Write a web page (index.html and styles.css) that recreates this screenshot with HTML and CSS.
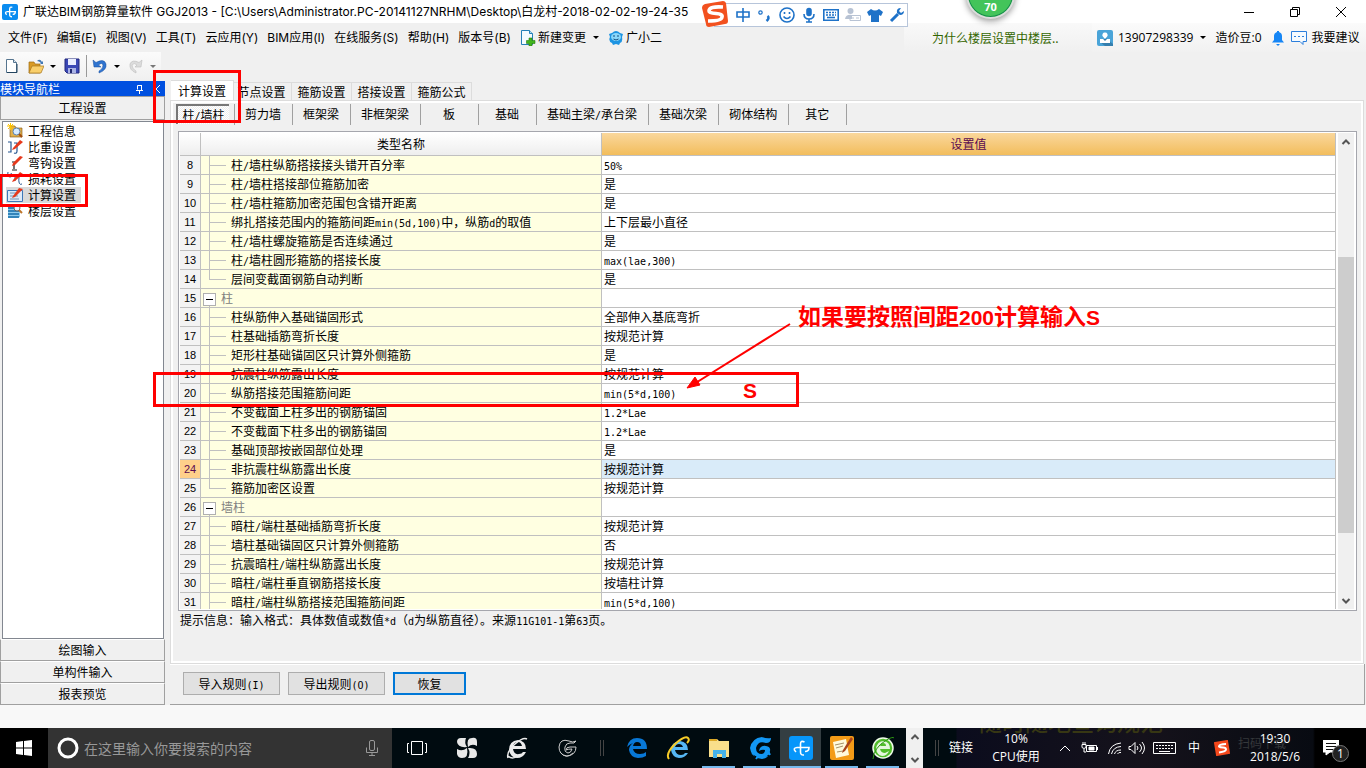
FILE: index.html
```html
<!DOCTYPE html>
<html lang="zh-CN">
<head>
<meta charset="utf-8">
<title>广联达BIM钢筋算量软件 GGJ2013</title>
<link rel="stylesheet" href="styles.css">
</head>
<body>
<div class="desktop">
  <header class="titlebar">
    <svg class="app-icon" viewBox="0 0 24 24"><rect width="24" height="24" rx="3" fill="#0a8cf0"/><path d="M15.500 5Q11.500 3.500 11.500 8v8q0 3.500 3.500 3M7 16Q3 12 8 11.500h12q0 4-4 4" fill="none" stroke="#fff" stroke-width="2"/></svg>
    <span class="title-text">广联达BIM钢筋算量软件 GGJ2013 - [C:\Users\Administrator.PC-20141127NRHM\Desktop\白龙村-2018-02-02-19-24-35</span>
    <div class="window-controls">
      <button aria-label="最小化"><svg viewBox="0 0 12 12"><path d="M1 6.500h10"/></svg></button>
      <button aria-label="还原"><svg viewBox="0 0 12 12"><path d="M1.500 3.500h7v7h-7zM3.500 3.500v-2h7v7h-2"/></svg></button>
      <button aria-label="关闭"><svg viewBox="0 0 12 12"><path d="M1 1l10 10M11 1L1 11"/></svg></button>
    </div>
  </header>

  <nav class="menubar">
    <div class="menus">
      <button>文件(F)</button><button>编辑(E)</button><button>视图(V)</button><button>工具(T)</button><button>云应用(Y)</button><button>BIM应用(I)</button><button>在线服务(S)</button><button>帮助(H)</button><button>版本号(B)</button>
      <button class="with-icon"><svg viewBox="0 0 16 16"><path d="M1.500.5h8l3 3v11h-11z" fill="#f4fbff" stroke="#2580b8"/><path d="M9.500.5v3h3" fill="#b9def2" stroke="#2580b8"/><path d="M9 8h3v2.500h3v3h-3V16H9v-2.500H6.500v-3H9z" fill="#41b51d" stroke="#287a10" stroke-width=".6"/></svg>新建变更<i class="caret"></i></button>
      <button class="with-icon"><svg viewBox="0 0 16 16"><path d="M1 4l3-1Q8-1 12 3l3 1-1 3q1 5-2 6l-1 2-3-1-3 1-1-2Q0 11 2 7z" fill="#1d94e2"/><ellipse cx="8" cy="7" rx="5" ry="4" fill="#8ad7fa"/><path d="M6 5v2M10 5v2M5.500 9Q8 11 10.500 9" stroke="#124e80" fill="none"/></svg>广小二</button>
    </div>
    <a class="help-link" href="#">为什么楼层设置中楼层..</a>
    <div class="account">
      <svg viewBox="0 0 16 16"><rect width="16" height="16" rx="2" fill="#4aa4d8"/><path d="M9 8l7 6v2H8l-5-4z" fill="#357fae"/><path d="M8 2.500a2.500 2.500 0 012 4.200L8 9 6 6.700A2.500 2.500 0 018 2.500zM3 9h3l2 2 2-2h3v4H3z" fill="#fff"/></svg>
      <button class="phone">13907298339<i class="caret"></i></button>
      <span class="beans">造价豆:0</span>
      <svg viewBox="0 0 16 16"><path d="M7 1h2v1q3 1 3 4v4l2 2.500H2L4 10V6q0-3 3-4zM6 14h4l-2 2z" fill="#1686f5"/></svg>
      <svg viewBox="0 0 16 16"><path d="M.5 1.500h15v10H12v3L9 11.500H.5z" fill="#f6fbff" stroke="#2c7fdc"/><path d="M3 6.500h2M7 6.500h2M11 6.500h2" stroke="#2c7fdc"/></svg>
      <button>我要建议</button>
    </div>
  </nav>

  <div class="toolbar">
    <button aria-label="新建"><svg viewBox="0 0 16 16"><path d="M2.500 1.500h7l3 3v10h-10z" fill="#fff" stroke="#56758f"/><path d="M9.500 1.500v3h3" fill="#dce8f4" stroke="#56758f"/><path d="M3 14.500h10V6" fill="none" stroke="#23445f"/></svg></button>
    <button aria-label="打开" class="drop"><svg viewBox="0 0 16 16"><path d="M1 4h5l1 2h5v9H1z" fill="#d99b26" stroke="#9c6c16" stroke-width=".7"/><path d="M4 8h12l-3 7H1z" fill="#f9cf6b" stroke="#a8761c" stroke-width=".7"/><path d="M9 3q3-3 5 1l1-1v3h-3l1-1q-2-2-4-2z" fill="#4279b5"/></svg><i class="caret"></i></button>
    <button aria-label="保存"><svg viewBox="0 0 16 16"><path d="M1 1h14v14H3l-2-2z" fill="#3a47b5" stroke="#23297d"/><path d="M4 1h8v6H4z" fill="#e9edff"/><path d="M4 10h8v5H4z" fill="#aab3e5"/><path d="M6 11h2v4H6z" fill="#20286f"/></svg></button>
    <i class="rule"></i>
    <button aria-label="撤销" class="drop"><svg viewBox="0 0 16 16"><path d="M1 2l1 7h7L6.500 7Q10 4 11 7q0 4-4 6v2q8-3 7-9Q12 0 4 4.500z" fill="#2f74d0" stroke="#174d9c" stroke-width=".5"/></svg><i class="caret"></i></button>
    <button aria-label="重做" class="drop" disabled><svg viewBox="0 0 16 16"><path d="M14 2l-1 7H7l2-2Q6 4 4 7q0 4 4 6v2Q1 12 2 6q2-5 9-1.500z" fill="#dcdcdc" stroke="#bdbdbd" stroke-width=".6"/></svg><i class="caret"></i></button>
  </div>

  <main class="workspace">
    <aside class="sidebar">
      <div class="side-title"><span>模块导航栏</span>
        <svg viewBox="0 0 28 12"><path d="M3.500 6.500V2.500h4v4M2 7.500h7M5.500 7v4M7.500 2v5M26 2l-4 4 4 4" fill="none" stroke="#fff"/></svg></div>
      <button class="side-group first">工程设置</button>
      <ul class="side-list">
        <li><svg viewBox="0 0 16 16"><path d="M3 3h5l1 2h6v9H3z" fill="#e0b04c" stroke="#80530f" stroke-width=".6"/><path d="M0 3h7M3.500 0v7M1 1l5 5M6 1L1 6" stroke="#ffc400"/><circle cx="9.500" cy="8.500" r="3.500" fill="#d6ebff" stroke="#5a82b0"/><path d="M12 11l3 3" stroke="#a04c10" stroke-width="2"/></svg>工程信息</li>
        <li><svg viewBox="0 0 16 16"><path d="M1 3h3v10H1M7 4h3v8q0 3-3 2" fill="none" stroke="#27568f" stroke-width="1.200"/><path d="M6 9L13 1l3 2-8 7-3 1z" fill="#e6391c"/></svg>比重设置</li>
        <li><svg viewBox="0 0 16 16"><path d="M7 8v6M5 15h5M5 7h4" fill="none" stroke="#181818" stroke-width="1.200"/><path d="M6 8L13 1l3 1-8 8-3 1z" fill="#e6391c"/></svg>弯钩设置</li>
        <li><svg viewBox="0 0 16 16"><path d="M1 1q-1 5 2 5t1-4M8 4v6M12 6q-1 9 3 7" fill="none" stroke="#27568f"/><path d="M6 9L13 1l3 2-8 7-3 1z" fill="#e6391c"/></svg>损耗设置</li>
        <li class="selected"><svg viewBox="0 0 16 16"><path d="M.5 3.500h15v11H.5z" fill="#dceaf9" stroke="#3d77b7"/><path d="M3 6h7M3 9h8M3 12h9" stroke="#7793b1"/><path d="M6 9L12 1l4 1-8 8-3 1z" fill="#e6391c"/></svg><span>计算设置</span></li>
        <li><svg viewBox="0 0 16 16"><path d="M1 4l3-2h11l-2 2v10l-2 1H1z" fill="#8dcbed"/><path d="M1 5h11M1 8h11M1 11h11M1 14h11" stroke="#146da9" stroke-width="1.500"/><circle cx="10" cy="5" r="3" fill="#e6f4ff" stroke="#666"/><path d="M12 7l3 3" stroke="#bd752a" stroke-width="2"/></svg>楼层设置</li>
      </ul>
      <button class="side-group">绘图输入</button>
      <button class="side-group">单构件输入</button>
      <button class="side-group">报表预览</button>
    </aside>

    <section class="content">
      <div class="tabs"><button class="active">计算设置</button><button>节点设置</button><button>箍筋设置</button><button>搭接设置</button><button>箍筋公式</button></div>
      <div class="page">
        <div class="subtabs"><div class="cell"><button class="active">柱<span class="m">/</span>墙柱</button></div><button>剪力墙</button><button>框架梁</button><button>非框架梁</button><button>板</button><button>基础</button><button>基础主梁<span class="m">/</span>承台梁</button><button>基础次梁</button><button>砌体结构</button><button>其它</button></div>
        <div class="grid-frame">
          <div class="grid-view">
            <table class="grid">
              <colgroup><col class="c-num"><col class="c-name"><col></colgroup>
              <thead><tr><th></th><th>类型名称</th><th class="hot">设置值</th></tr></thead>
              <tbody>
                <tr><th>8</th><td class="leaf">柱<span class="m">/</span>墙柱纵筋搭接接头错开百分率</td><td><span class="m">50%</span></td></tr>
                <tr><th>9</th><td class="leaf">柱<span class="m">/</span>墙柱搭接部位箍筋加密</td><td>是</td></tr>
                <tr><th>10</th><td class="leaf">柱<span class="m">/</span>墙柱箍筋加密范围包含错开距离</td><td>是</td></tr>
                <tr><th>11</th><td class="leaf">绑扎搭接范围内的箍筋间距<span class="m">min(5d,100)</span>中，纵筋<span class="m">d</span>的取值</td><td>上下层最小直径</td></tr>
                <tr><th>12</th><td class="leaf">柱<span class="m">/</span>墙柱螺旋箍筋是否连续通过</td><td>是</td></tr>
                <tr><th>13</th><td class="leaf">柱<span class="m">/</span>墙柱圆形箍筋的搭接长度</td><td><span class="m">max(lae,300)</span></td></tr>
                <tr><th>14</th><td class="leaf last">层间变截面钢筋自动判断</td><td>是</td></tr>
                <tr><th>15</th><td class="group"><button aria-label="折叠"></button>柱</td><td></td></tr>
                <tr><th>16</th><td class="leaf">柱纵筋伸入基础锚固形式</td><td>全部伸入基底弯折</td></tr>
                <tr><th>17</th><td class="leaf">柱基础插筋弯折长度</td><td>按规范计算</td></tr>
                <tr><th>18</th><td class="leaf">矩形柱基础锚固区只计算外侧箍筋</td><td>是</td></tr>
                <tr><th>19</th><td class="leaf">抗震柱纵筋露出长度</td><td>按规范计算</td></tr>
                <tr><th>20</th><td class="leaf">纵筋搭接范围箍筋间距</td><td><span class="m">min(5*d,100)</span></td></tr>
                <tr><th>21</th><td class="leaf">不变截面上柱多出的钢筋锚固</td><td><span class="m">1.2*Lae</span></td></tr>
                <tr><th>22</th><td class="leaf">不变截面下柱多出的钢筋锚固</td><td><span class="m">1.2*Lae</span></td></tr>
                <tr><th>23</th><td class="leaf">基础顶部按嵌固部位处理</td><td>是</td></tr>
                <tr class="current"><th>24</th><td class="leaf">非抗震柱纵筋露出长度</td><td>按规范计算</td></tr>
                <tr><th>25</th><td class="leaf last">箍筋加密区设置</td><td>按规范计算</td></tr>
                <tr><th>26</th><td class="group"><button aria-label="折叠"></button>墙柱</td><td></td></tr>
                <tr><th>27</th><td class="leaf">暗柱<span class="m">/</span>端柱基础插筋弯折长度</td><td>按规范计算</td></tr>
                <tr><th>28</th><td class="leaf">墙柱基础锚固区只计算外侧箍筋</td><td>否</td></tr>
                <tr><th>29</th><td class="leaf">抗震暗柱<span class="m">/</span>端柱纵筋露出长度</td><td>按规范计算</td></tr>
                <tr><th>30</th><td class="leaf">暗柱<span class="m">/</span>端柱垂直钢筋搭接长度</td><td>按墙柱计算</td></tr>
                <tr><th>31</th><td class="leaf">暗柱<span class="m">/</span>端柱纵筋搭接范围箍筋间距</td><td><span class="m">min(5*d,100)</span></td></tr>
              </tbody>
            </table>
          </div>
          <div class="scrollbar">
            <svg viewBox="0 0 16 17"><path d="M4.500 11L8 7.500 11.500 11" /></svg>
            <i class="above"></i><i class="thumb"></i><i class="below"></i>
            <svg viewBox="0 0 16 17"><path d="M4.500 7L8 10.500 11.500 7" /></svg>
          </div>
        </div>
        <p class="hint">提示信息：输入格式：具体数值或数值<span class="m">*d</span>（<span class="m">d</span>为纵筋直径）。来源<span class="m">11G101-1</span>第<span class="m">63</span>页。</p>
      </div>
      <div class="actions"><button>导入规则<span class="m">(I)</span></button><button>导出规则<span class="m">(O)</span></button><button class="default">恢复</button></div>
    </section>
  </main>

  <footer class="taskbar">
    <button class="start" aria-label="开始"><svg viewBox="0 0 16 16"><path d="M0 2l7-1v6.500H0zM8 1l8-1v7.500H8zM0 8.500h7V15l-7-1zM8 8.500h8V16l-8-1z" fill="#fff"/></svg></button>
    <label class="search"><svg class="ring" viewBox="0 0 22 22"><circle cx="11" cy="11" r="9" fill="none" stroke="#fff" stroke-width="3"/></svg><input type="text" aria-label="搜索" placeholder="在这里输入你要搜索的内容"><svg class="mic" viewBox="0 0 12 16"><rect x="3.500" y=".5" width="5" height="10" rx="1.500"/><path d="M.5 7.500v5h11v-5M6 13v3M3 15.500h6"/></svg></label>
    <div class="pinned">
      <button aria-label="任务视图"><svg viewBox="0 0 24 24"><path d="M6.500 5.500h11v13h-11zM4 7.500H2.500v9H4M20 7.500h1.500v9H20" fill="none" stroke="#fff"/></svg></button>
      <button aria-label="浏览器"><svg viewBox="0 0 24 24"><g fill="#e8e8e8"><path d="M12 11Q3 12 2 6q0-4 4-4h5q-2 5 1 9z"/><path d="M13 11Q11 2 17 2q5-1 5 4v4q-5-3-9 1z"/><path d="M13 12q9-1 9 6 0 4-4 4h-5q3-5 0-10z"/><path d="M12 12q2 10-5 10-4 0-5-4v-5q5 3 10-1z"/></g></svg></button>
      <button aria-label="浏览器"><svg viewBox="0 0 24 24"><path d="M21 13H8q1 6 6 5 3 0 4-2h3q-3 6-9 6-7-1-8-8 0-9 9-10 8 1 8 9zM8 10h9q-1-4-4-4-4 0-5 4z" fill="#ececec"/><path d="M3 22Q1 16 10 8q8-7 12-5M3 20q4 4 10 0" fill="none" stroke="#ececec" stroke-width="1.500"/></svg></button>
      <button aria-label="广联达"><svg viewBox="0 0 24 24"><path d="M21 5q-3 2-7 0-9-3-10 6 0 8 8 9 9-1 9-9h-6q-4 0-4 3 2-1 6-1-1 4-4 4-4-1-3-6 1-4 5-4 5 1 6-2M5 16q6 8 13 1" fill="none" stroke="#ccc"/></svg></button>
    </div>
    <i class="grip"></i>
    <div class="apps">
      <button aria-label="Edge"><svg viewBox="0 0 24 24"><path d="M2 11Q4 2 12 2q10 0 10 11H8q1 5 7 5 4 0 6-2v4q-3 2-8 2-8-1-9-8 0-4 4-7-3 1-6 4zM8 10h8q0-4-4-4-3 0-4 4z" fill="#0878d7"/></svg></button>
      <button aria-label="Internet Explorer"><svg viewBox="0 0 24 24"><path d="M22 14H9q1 5 6 5 3 0 4-2h3q-3 5-9 5-7-1-8-8 0-8 9-9 8 1 8 9zM9 11h8q-1-3-4-3-3 0-4 3z" fill="#56b7f4"/><path d="M3 23Q-1 18 9 8 19-1 22 2q2 2-1 5" fill="none" stroke="#f7cc28" stroke-width="2"/></svg></button>
      <button class="open" aria-label="文件资源管理器"><svg viewBox="0 0 24 24"><path d="M2 3h8l2 2h10v16H2z" fill="#f9df8b"/><path d="M2 3h8v2H2z" fill="#dda927"/><path d="M6 22v-8h13v8h-4v-4h-5v4z" fill="#45b2e9"/></svg></button>
      <button class="open" aria-label="广联达"><svg viewBox="0 0 24 24"><path d="M23 2q0 5-5 5-8-3-10 5 0 6 6 6 3-1 3-4-3-1-6 1 1-6 7-5 5 1 4 5-1 7-8 8-11-1-12-11Q4 2 14 1q5 2 9 1z" fill="#1297f4"/><path d="M4 17l6 3-2 3M16 21l5-4 1 2" stroke="#1297f4" stroke-width="2"/></svg></button>
      <button class="open active" aria-label="钢筋算量"><svg viewBox="0 0 24 24"><rect width="24" height="24" rx="3" fill="#0796fa"/><path d="M15.500 6Q11.500 4 11.500 8v8q0 3.500 3.500 3M7 16Q3 12 8 11.500h12q0 4-4 4" fill="none" stroke="#fff" stroke-width="1.600"/></svg></button>
      <button class="open" aria-label="记事"><svg viewBox="0 0 24 24"><rect width="24" height="24" rx="2" fill="#f39b17"/><path d="M3 6l13-3 3 16-13 3z" fill="#fff9dc"/><path d="M5 9l9-2M6 12l7-2M7 16l6-1" stroke="#a3906a"/><path d="M13 14L21 1l2 2-8 12-3 2z" fill="#a8431c"/></svg></button>
      <button class="open" aria-label="360浏览器"><svg viewBox="0 0 24 24"><circle cx="12" cy="12" r="10" fill="#51bd2b" stroke="#effce9" stroke-width="1.500"/><path d="M19 13H9q1 4 5 4l4-2q-2 5-7 5-5-1-6-7 1-8 8-8 6 1 6 8zM9 10h6q0-3-3-3-2 0-3 3z" fill="#e4f7dc"/><path d="M2 23Q3 12 14 5q8-5 9-3" stroke="#2c9713" fill="none"/></svg></button>
    </div>
    <div class="app-scroll"><svg viewBox="0 0 17 40"><path d="M5.500 11L9 7.500l3.500 3.500M5.500 30L9 33.500l3.500-3.500" /></svg></div>
    <div class="tray">
      <div class="wallpaper" aria-hidden="true"><b>随时随地查询规范</b><span>扫码下载</span></div>
      <i class="grip"></i>
      <span class="links">链接</span>
      <div class="cpu">10%<br>CPU使用</div>
      <svg class="t-up" viewBox="0 0 12 16"><path d="M1 11l5-5 5 5"/></svg>
      <svg class="t-power" viewBox="0 0 17 16"><path d="M5.500 5.500h10v6h-10zM16.500 7v3M1 4.500h4v3q-2 2-4 0zM2 2v2M4 2v2M3 9v3h2"/><path d="M8 7h5v3H8z" fill="#fff"/></svg>
      <svg class="t-wifi" viewBox="0 0 16 16"><path d="M1.500 14Q3 4 14 3M4.500 14Q6 7 14 6.500M7.500 14q1-4 6.500-4M10.500 14q1-2 3.500-1.500"/></svg>
      <svg class="t-vol" viewBox="0 0 17 16"><path d="M1 6.500h2l4-4v11l-4-4H1zM9 6q2 2 0 4M11.500 4q4 4 0 8M14 2q5 6 0 12"/></svg>
      <svg class="t-key" viewBox="0 0 23 14"><path d="M.5 1.500h22v11H.5zM6 10.500h11"/><path d="M3 4.500h17M3 7.500h17" stroke-dasharray="2 1"/></svg>
      <span class="ime">中</span>
      <svg class="t-sogou" viewBox="0 0 16 16"><path d="M1 3l12-2 2 12-12 2z" fill="#f4481c" stroke="#f4481c" stroke-width="2"/><path d="M12 4Q5 4 5 6.500q1 1 4 1t3 2-7 3" fill="none" stroke="#fff" stroke-width="2"/></svg>
      <div class="clock">19:30<br>2018/5/6</div>
      <button class="notice" aria-label="通知"><svg viewBox="0 0 16 16"><path d="M0 0h16v12H7l-4 3v-3H0z" fill="#fff"/><path d="M3 3.500h10M3 6.500h10M3 9.500h7" stroke="#111"/></svg><span class="badge">1</span></button>
    </div>
  </footer>

  <div class="ime-bar">
    <svg class="ime-logo" viewBox="0 0 28 28"><path d="M4 4l18-3q2 0 3 2l2 18q0 3-3 3L8 27q-3 0-3-3L1 8q0-3 3-4z" fill="#f2511f"/><path d="M22 7Q8 6 8 11q0 2 7 2.500t6 3.500q0 4-14 4" fill="none" stroke="#fff" stroke-width="3.600"/></svg>
    <svg viewBox="0 0 16 16"><path d="M2 5h12v5H2zM8 1v14"/></svg>
    <svg viewBox="0 0 16 16"><circle cx="3.500" cy="5.500" r="1.700" stroke-width="1.200"/><path d="M10.500 9q2.500 2-1 5" stroke-width="2.500"/></svg>
    <svg viewBox="0 0 16 16"><circle cx="8" cy="8" r="7"/><path d="M5.500 5v2M10.500 5v2M4.500 9.500q3.500 4 7 0"/></svg>
    <svg viewBox="0 0 16 16"><rect x="6" y="1.500" width="4" height="7" rx="2" fill="#1e72c8"/><path d="M3 7q0 5 5 5t5-5M8 12v3M5 15h6"/></svg>
    <svg viewBox="0 0 16 16"><path d="M.8 2.800h14.400v10.400H.8z"/><path d="M3 5.500h10M3 8h10" stroke-dasharray="2 1"/><path d="M4 10.500h8"/></svg>
    <svg class="off" viewBox="0 0 16 16"><circle cx="5.500" cy="4" r="3" fill="#b8c3d4" stroke="none"/><path d="M0 12q1-5 7-4v4z" fill="#b8c3d4" stroke="none"/><path d="M5 8.500h10.500v5H5zM7 11h2M11 11h3" stroke-width="1"/></svg>
    <svg viewBox="0 0 16 16"><path d="M4 2q4 3 8 0l4 3-2 4-2-1v7H4V8L2 9 0 5z" fill="#1e72c8" stroke="none"/></svg>
    <svg viewBox="0 0 16 16"><path d="M2 14l7-7" stroke-width="3"/><path d="M12 1Q7 1 8 6l3 2q4 0 4-4l-3 2-2-2z" fill="#1e72c8" stroke="none"/></svg>
  </div>
  <div class="speed-ball">70</div>

  <div class="mark mark-tab"></div>
  <div class="mark mark-nav"></div>
  <div class="mark mark-row"></div>
  <span class="note note-s">S</span>
  <span class="note note-text">如果要按照间距<b>200</b>计算输入<b>S</b></span>
  <svg class="note-arrow" viewBox="0 0 110 72"><path d="M106 4L10 64" stroke="#f00" stroke-width="2"/><path d="M3 68l8-11 5 8z" fill="#f00" stroke="#f00"/></svg>
</div>
</body>
</html>
```
FILE: styles.css
```css
* { box-sizing: border-box; }
body { margin: 0; font: 12px/16px "Noto Sans CJK SC", sans-serif; color: #000; }
button { font: inherit; color: inherit; background: none; border: 0; padding: 0; margin: 0; white-space: nowrap; }
svg { display: block; flex: none; }
.m { font-family: "DejaVu Sans Mono", monospace; font-size: 10px; line-height: 10px; }
.caret { display: inline-block; border: 3px solid transparent; border-top-color: #000; border-bottom: 0; margin-left: 7px; }
.desktop { position: relative; display: flex; flex-direction: column; height: 100vh; overflow: hidden; background: #f0f0f0; }

.titlebar { display: flex; align-items: center; height: 23px; flex: none; padding-left: 2px; background: #fff; white-space: nowrap; }
.app-icon { width: 16px; height: 16px; }
.title-text { margin-left: 5px; font-family: Inter, "Noto Sans CJK SC", sans-serif; }
.window-controls { display: flex; margin-left: auto; padding-right: 2px; }
.window-controls button { width: 46px; height: 20px; display: flex; align-items: center; justify-content: center; }
.window-controls svg { width: 12px; height: 12px; fill: none; stroke: #000; }

.menubar { display: flex; height: 29px; flex: none; align-items: stretch; font-family: "Open Sans", "Noto Sans CJK SC", sans-serif; }
.menus { display: flex; flex: 1; align-items: center; gap: 9px; padding-left: 8px; font-family: Inter, "Noto Sans CJK SC", sans-serif; }
.with-icon { display: flex; align-items: center; }
.with-icon svg { width: 16px; height: 16px; margin-right: 2px; }
.help-link { width: 188px; display: flex; align-items: center; padding-left: 28px; color: #360; text-decoration: none; background: linear-gradient(#f9f9f9, #f0f0f0); font-family: "Noto Sans CJK SC", sans-serif; }
.account { width: 274px; display: flex; align-items: center; padding-left: 5px; background: linear-gradient(#fbfbfb, #f1f1f1); white-space: nowrap; }
.account svg { width: 16px; height: 16px; margin-right: 5px; }
.account .beans { margin: 0 8px 0 9px; }
.phone { display: flex; align-items: center; }

.toolbar { display: flex; align-items: center; height: 28px; flex: none; align-self: flex-start; padding: 0 5px 0 4px; gap: 8px; background: linear-gradient(#fbfbfb, #f0f0f0); }
.toolbar svg { width: 16px; height: 16px; }
.toolbar .drop { display: flex; align-items: center; }
.toolbar .caret { margin-left: 6px; }
.toolbar :disabled .caret { border-top-color: #777; }
.rule { width: 1px; height: 22px; background: #999; margin: 0 -3px 0 -2px; }

.workspace { display: flex; flex: 1; min-height: 0; gap: 5px; }
.sidebar { width: 165px; flex: none; display: flex; flex-direction: column; padding-top: 1px; }
.side-title { display: flex; align-items: center; justify-content: space-between; height: 15px; flex: none; color: #fff; background: #0050e0; padding-right: 3px; }
.side-title svg { width: 28px; height: 12px; }
.side-group { height: 22px; flex: none; border: 1px solid #a0a0a0; border-top-color: #fff; text-align: center; line-height: 18px; }
.side-group.first { height: 24px; border-top-color: #a0a0a0; margin-bottom: 1px; line-height: 22px; }
.side-list { flex: 1; min-height: 0; margin: 0 1px 0 2px; padding: 1px 3px; list-style: none; background: #fff; border: 1px solid #828790; }
.side-list li { display: flex; height: 16px; gap: 5px; padding-left: 1px; }
.side-list svg { width: 16px; height: 16px; }
.side-list .selected { background: #d9d9d9; width: 75px; }

.content { flex: 1; min-width: 0; display: flex; flex-direction: column; }
.tabs { display: flex; align-items: flex-end; height: 20px; flex: none; padding-left: 1px; }
.tabs button { width: 60px; height: 18px; border: 1px solid #dcdcdc; border-width: 1px 1px 0 0; }
.tabs .active { position: relative; z-index: 1; width: 63px; height: 20px; margin-right: -2px; padding-left: 7px; text-align: left; background: #fff; }
.page { flex: 1; min-height: 0; display: flex; flex-direction: column; margin-right: 2px; border: 1px solid #dcdcdc; box-shadow: inset 0 0 0 2px #fff; padding: 3px 6px 0 7px; }
.subtabs { display: flex; height: 21px; flex: none; margin-bottom: 6px; }
.subtabs > * { min-width: 58px; padding: 0 11px 2px 10px; border-right: 1px solid #a0a0a0; }
.subtabs .cell { padding: 0 5px 0 0; margin-left: -2px; width: 59px; }
.subtabs .active { height: 20px; width: 53px; border: 0 solid #777; border-width: 2px 0 0 2px; background: repeating-conic-gradient(#fff 0 25%, #eee 0 50%) 0 0 / 2px 2px; }
.grid-frame { flex: 1; min-height: 0; display: flex; border: 1px solid #a5a6ad; background: #fff; padding: 1px; }
.grid-view { flex: 1; min-width: 0; overflow: hidden; }
.grid { width: 100%; table-layout: fixed; border-spacing: 0; }
.c-num { width: 21px; }
.c-name { width: 401px; }
.grid th, .grid td { height: 19px; padding: 0; border: solid #c0c0c0; border-width: 0 1px 1px 0; font-weight: normal; line-height: 18px; white-space: nowrap; overflow: hidden; }
.grid td { padding-left: 2px; }
.grid thead th { height: 23px; line-height: 22px; background: linear-gradient(#fff, #eee); }
.grid thead .hot { background: linear-gradient(#fad79c, #f2bd5c); color: #5a0a50; }
.grid tbody th { background: #f3f3f3; font-family: "Liberation Sans", sans-serif; font-size: 11px; }
.grid .leaf, .grid .group { background-color: #ffffe1; background-repeat: no-repeat; background-image: linear-gradient(#c0c0c0, #c0c0c0), linear-gradient(#c0c0c0, #c0c0c0); }
.grid .leaf { padding-left: 30px; background-position: 8px 0, 8px 9px; background-size: 1px 100%, 17px 1px; }
.grid .last { background-size: 1px 10px, 17px 1px; }
.grid .group { color: #808080; background-position: 8px 15px, 8px 15px; background-size: 1px 4px; }
.group button { width: 13px; height: 13px; margin-right: 5px; vertical-align: middle; border: 1px solid #b0b0b0; background: linear-gradient(#000, #000) center / 7px 1px no-repeat #fff; }
.grid .current th { background: #ffd08a; color: #5a0a50; }
.grid .current td:last-child { background: #d9ebf9; }
.scrollbar { width: 16px; margin: 0 1px 0 2px; display: flex; flex-direction: column; background: #f0f0f0; }
.scrollbar svg { width: 16px; height: 17px; }
.scrollbar path, .app-scroll path { fill: none; stroke: #555; stroke-width: 2; }
.above { flex: 107; } .thumb { flex: 276; background: #cdcdcd; } .below { flex: 59; }
.hint { margin: 1px 2px 0; height: 51px; flex: none; }
.actions { display: flex; gap: 8px; height: 41px; flex: none; padding: 8px 13px; margin-right: 1px; border: solid #a0a0a0; border-width: 0 1px 1px 0; box-shadow: inset 0 1px #fff; }
.actions button { width: 97px; height: 23px; border: 1px solid #adadad; background: #e1e1e1; }
.actions .default { width: 73px; border: 2px solid #0078d7; }

.taskbar { display: flex; height: 40px; flex: none; margin-top: 23px; background: #000b10; color: #fff; box-shadow: 0 -23px #f8f8f8; white-space: nowrap; }
.start { width: 48px; background: #000; display: flex; align-items: center; justify-content: center; }
.start svg { width: 16px; height: 16px; }
.search { width: 344px; display: flex; align-items: center; background: #333; padding: 0 14px 0 9px; }
.ring { width: 22px; height: 22px; }
.search input { flex: 1; min-width: 0; border: 0; padding: 0 0 0 5px; background: none; font: 14px/20px "Noto Sans CJK SC", sans-serif; color: #fff; }
.search input::placeholder { color: #989898; opacity: 1; }
.mic { width: 12px; height: 16px; fill: none; stroke: #999; }
.pinned, .apps { display: flex; }
.pinned button, .apps button { display: flex; align-items: center; justify-content: center; }
.pinned button { width: 50px; }
.pinned svg, .apps svg { width: 24px; height: 24px; }
.grip { width: 4px; height: 16px; align-self: center; flex: none; border: solid #444; border-width: 0 1px; }
.taskbar > .grip { margin: 0 12px 0 8px; }
.apps button { width: 41px; border-bottom: 2px solid transparent; padding-top: 2px; }
.apps .open { width: 33px; margin: 0 4px; border-bottom-color: #76b9ed; }
.apps .active { width: 41px; margin: 0; background: #343e42; }
.app-scroll { width: 17px; margin-left: 3px; background: #f0f0f0; }
.tray { position: relative; flex: 1; display: flex; align-items: center; padding-left: 12px; font-family: "Open Sans", "Noto Sans CJK SC", sans-serif; overflow: hidden; background: linear-gradient(90deg, #000b10 33px, #0b0c1d 34px, #15121b 50%, #080b12 390px, #000 392px); }
.tray > * { position: relative; flex: none; }
.tray svg { height: 16px; fill: none; stroke: #fff; }
.tray .wallpaper { position: absolute; inset: 0; color: #373713; }
.wallpaper b { position: absolute; left: 56px; top: -18px; font-size: 23px; line-height: 24px; font-weight: 500; }
.wallpaper span { position: absolute; left: 315px; top: 8px; color: #35383b; }
.links { margin-left: 10px; }
.cpu, .clock { text-align: center; line-height: 18px; }
.cpu { width: 52px; margin: 0 17px; }
.t-up { width: 12px; margin-right: 10px; }
.t-power { width: 17px; margin-right: 9px; }
.t-wifi { width: 16px; margin-right: 5px; }
.t-vol { width: 17px; margin-right: 8px; }
.t-key { width: 23px; margin-right: 12px; }
.ime { margin-right: 14px; }
.t-sogou { width: 16px; margin-right: 18px; }
.clock { width: 54px; }
.notice { width: 26px; height: 28px; margin-left: 21px; }
.notice svg { width: 16px; }
.badge { position: absolute; right: 0; bottom: 0; width: 17px; height: 17px; border-radius: 50%; border: 1px solid #777; background: #222; line-height: 15px; }

.ime-bar { position: absolute; left: 714px; top: 3px; height: 24px; width: 194px; display: flex; align-items: center; gap: 6px; padding-left: 20px; background: #fff; border: 1px solid #b7c5da; }
.ime-bar svg { width: 16px; height: 16px; fill: none; stroke: #1e72c8; stroke-width: 1.6; }
.ime-bar .off { stroke: #b8c3d4; }
.ime-bar .ime-logo { position: absolute; left: -14px; top: -4px; width: 28px; height: 28px; stroke: none; }
.speed-ball { position: absolute; left: 966px; top: -30px; width: 49px; height: 49px; border-radius: 50%; background: #43c45a; border: 2px solid #dcdcdc; box-shadow: inset 0 0 0 1px #168c4c, 0 2px 6px #999; color: #fff; font: bold 11px/70px "Open Sans", sans-serif; text-align: center; }

.mark { position: absolute; border: 3px solid #f00; }
.mark-tab { left: 153px; top: 70px; width: 88px; height: 53px; }
.mark-nav { left: -1px; top: 174px; width: 89px; height: 33px; }
.mark-row { left: 153px; top: 372px; width: 646px; height: 35px; }
.note { position: absolute; color: #f00; font: bold 21px/24px "Liberation Sans", sans-serif; white-space: nowrap; }
.note-s { left: 743px; top: 379px; }
.note-text { left: 798px; top: 303px; font: bold 23px/24px "Noto Sans CJK SC", sans-serif; }
.note-text b { font-family: "Liberation Sans", sans-serif; font-size: 21px; }
.note-arrow { position: absolute; left: 684px; top: 320px; width: 110px; height: 72px; }
```
